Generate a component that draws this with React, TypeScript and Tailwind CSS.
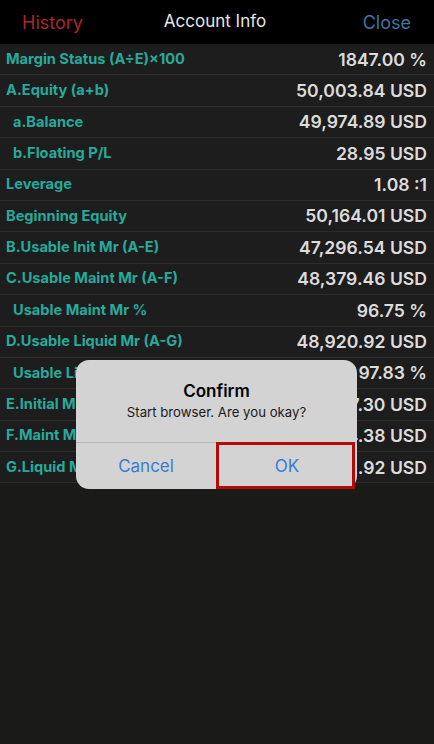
const ROWS: { label: string; value: string; indent?: boolean }[] = [
  { label: 'Margin Status (A÷E)×100', value: '1847.00 %' },
  { label: 'A.Equity (a+b)', value: '50,003.84 USD' },
  { label: 'a.Balance', value: '49,974.89 USD', indent: true },
  { label: 'b.Floating P/L', value: '28.95 USD', indent: true },
  { label: 'Leverage', value: '1.08 :1' },
  { label: 'Beginning Equity', value: '50,164.01 USD' },
  { label: 'B.Usable Init Mr (A-E)', value: '47,296.54 USD' },
  { label: 'C.Usable Maint Mr (A-F)', value: '48,379.46 USD' },
  { label: 'Usable Maint Mr %', value: '96.75 %', indent: true },
  { label: 'D.Usable Liquid Mr (A-G)', value: '48,920.92 USD' },
  { label: 'Usable Liquid Mr %', value: '97.83 %', indent: true },
  { label: 'E.Initial Mr', value: '2,707.30 USD' },
  { label: 'F.Maint Mr', value: '1,624.38 USD' },
  { label: 'G.Liquid Mr', value: '1,082.92 USD' },
];

export default function App() {
  return (
    <div className="relative w-[434px] h-[744px] bg-[#1a1b19] overflow-hidden font-['Inter','Liberation_Sans',sans-serif]">
      {/* ── Header ───────────────────────── */}
      <div className="h-[44px] bg-black flex items-center px-[22px] text-[18px]">
        <span className="w-[100px] text-[#ab252c]">History</span>
        <span className="flex-1 text-center text-[#e6e6e6] text-[17px] pr-[4px]">Account Info</span>
        <span className="w-[100px] text-right text-[#3f74a3] pr-[1px]">Close</span>
      </div>

      {/* ── Rows ─────────────────────────── */}
      <div className="flex flex-col">
        {ROWS.map((r) => (
          <div
            key={r.label}
            className="h-[31.4px] flex items-center justify-between bg-[#1d1d1d] border-b border-[#2c2c2c] pr-[7px] pt-[1px]"
          >
            <span className={`text-[14.6px] font-bold text-[#27a99c] ${r.indent ? 'pl-[13px]' : 'pl-[6px]'}`}>
              {r.label}
            </span>
            <span className="text-[17.6px] font-semibold text-[#dcdcdc]">{r.value}</span>
          </div>
        ))}
      </div>

      {/* ── Alert ────────────────────────── */}
      <div className="absolute left-[76px] top-[360px] w-[281px] h-[129px] rounded-[13px] bg-[#d3d3d3] flex flex-col">
        <div className="h-[83px] flex flex-col items-center pt-[20px] border-b border-[#b5b5b5]">
          <span className="text-[17px] font-semibold text-black leading-[22px]">Confirm</span>
          <span className="text-[13.2px] text-[#1a1a1a] mt-[1px]">Start browser. Are you okay?</span>
        </div>
        <div className="flex-1 flex pt-[2px]">
          <button className="flex-1 text-[17px] text-[#3a7bd5] border-r border-[#b5b5b5]">Cancel</button>
          <button className="flex-1 text-[17px] text-[#3a7bd5]">OK</button>
        </div>
      </div>

      {/* annotation box */}
      <div className="absolute left-[216px] top-[442px] w-[139px] h-[47px] border-[3px] border-[#b40a0a]" />
    </div>
  );
}
